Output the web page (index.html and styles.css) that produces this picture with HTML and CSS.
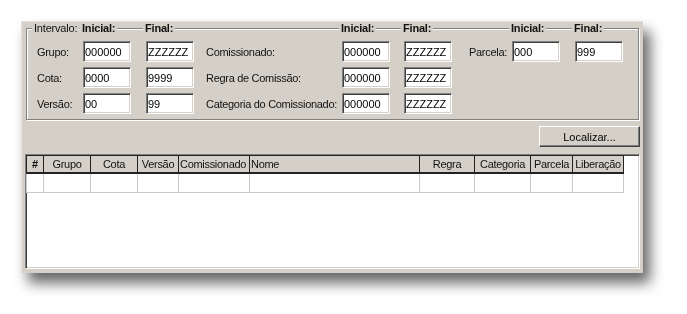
FILE: index.html
```html
<!DOCTYPE html>
<html>
<head>
    <meta charset="utf-8">
    <title>Localizar comissões</title>
    <link rel="stylesheet" href="styles.css">
</head>
<body>
    <div class="page">
        <div class="window">
            <!-- intervalo de pesquisa -->
            <div class="range">
                <span class="cap col-a">Intervalo:</span>
                <span class="cap bold col-b">Inicial:</span>
                <span class="cap bold col-c">Final:</span>
                <span class="cap bold col-e">Inicial:</span>
                <span class="cap bold col-f">Final:</span>
                <span class="cap bold col-h">Inicial:</span>
                <span class="cap bold col-i">Final:</span>

                <label class="lbl col-a">Grupo:</label>
                <input class="field col-b" type="text" value="000000">
                <input class="field col-c" type="text" value="ZZZZZZ">
                <label class="lbl lbl-mid col-d">Comissionado:</label>
                <input class="field col-e" type="text" value="000000">
                <input class="field col-f" type="text" value="ZZZZZZ">
                <label class="lbl lbl-right col-g">Parcela:</label>
                <input class="field col-h" type="text" value="000">
                <input class="field col-i" type="text" value="999">

                <label class="lbl col-a">Cota:</label>
                <input class="field col-b" type="text" value="0000">
                <input class="field col-c" type="text" value="9999">
                <label class="lbl lbl-mid col-d">Regra de Comissão:</label>
                <input class="field col-e" type="text" value="000000">
                <input class="field col-f" type="text" value="ZZZZZZ">

                <label class="lbl col-a">Versão:</label>
                <input class="field col-b" type="text" value="00">
                <input class="field col-c" type="text" value="99">
                <label class="lbl lbl-mid col-d">Categoria do Comissionado:</label>
                <input class="field col-e" type="text" value="000000">
                <input class="field col-f" type="text" value="ZZZZZZ">
            </div>

            <div class="actions">
                <button class="btn" type="button">Localizar...</button>
            </div>

            <!-- resultado -->
            <div class="gridbox">
                <table class="grid">
                    <colgroup>
                        <col class="w-num">
                        <col class="w-grupo">
                        <col class="w-cota">
                        <col class="w-versao">
                        <col class="w-comis">
                        <col class="w-nome">
                        <col class="w-regra">
                        <col class="w-cat">
                        <col class="w-parc">
                        <col class="w-lib">
                    </colgroup>
                    <tr>
                        <th class="first bold">#</th>
                        <th>Grupo</th>
                        <th>Cota</th>
                        <th>Versão</th>
                        <th class="left">Comissionado</th>
                        <th class="left">Nome</th>
                        <th>Regra</th>
                        <th>Categoria</th>
                        <th>Parcela</th>
                        <th>Liberação</th>
                    </tr>
                    <tr>
                        <td class="first"></td>
                        <td></td>
                        <td></td>
                        <td></td>
                        <td></td>
                        <td></td>
                        <td></td>
                        <td></td>
                        <td></td>
                        <td></td>
                    </tr>
                </table>
            </div>
        </div>
    </div>
</body>
</html>
```

FILE: styles.css
```css
html, body {
    height: 100%;
}
body {
    margin: 0;
    background-color: #fff;
    font-family: "Liberation Sans", Arial, sans-serif;
    font-size: 11px;
    color: #111;
}
.page {
    box-sizing: border-box;
    height: 314px;
    padding: 21px 0 0 21px;
}
.window {
    box-sizing: border-box;
    width: 622px;
    height: 252px;
    padding: 6px 3px 0 3px;
    background-color: #d4d0c8;
    border-top: 1px solid #e4e1db;
    border-left: 1px solid #e4e1db;
    filter: drop-shadow(7px 10px 7px rgba(0, 0, 0, 0.6));
}
.bold {
    font-weight: bold;
}
/* caixa de grupo */
.range {
    box-sizing: border-box;
    height: 92px;
    margin: 0 1px;
    padding-top: 1px;
    border: 1px solid #808080;
    box-shadow: 1px 1px 0 #fff, inset 1px 1px 0 #fff;
    display: grid;
    grid-template-columns: 56px 48px 15px 48px 148px 48px 14px 48px 60px 48px 15px 48px;
    grid-template-rows: 6px 21px 21px 21px;
    row-gap: 5px;
    align-items: center;
}
.col-a { grid-column: 1; }
.col-b { grid-column: 2; }
.col-c { grid-column: 4; }
.col-d { grid-column: 5; }
.col-e { grid-column: 6; }
.col-f { grid-column: 8; }
.col-g { grid-column: 9; }
.col-h { grid-column: 10; }
.col-i { grid-column: 12; }
.cap {
    align-self: start;
    justify-self: start;
    height: 13px;
    line-height: 13px;
    margin-top: -8px;
    margin-left: -3px;
    padding: 0 2px;
    background-color: #d4d0c8;
    white-space: nowrap;
    letter-spacing: -0.2px;
}
.cap.col-a {
    margin-left: 5px;
    font-weight: normal;
}
.lbl {
    padding-left: 10px;
    white-space: nowrap;
    letter-spacing: -0.3px;
}
.lbl-mid {
    padding-left: 12px;
}
.lbl-right {
    padding-left: 17px;
}
.field {
    box-sizing: border-box;
    width: 48px;
    height: 21px;
    margin: 0;
    padding: 0 1px;
    font-family: "Liberation Sans", Arial, sans-serif;
    font-size: 11px;
    color: #000;
    background-color: #fff;
    border-style: solid;
    border-width: 1px;
    border-color: #808080 #fff #fff #808080;
    box-shadow: inset 1px 1px 0 #404040, inset -1px -1px 0 #d4d0c8;
    outline: none;
}
/* botao */
.actions {
    display: flex;
    justify-content: flex-end;
    margin-top: 6px;
}
.btn {
    box-sizing: border-box;
    width: 101px;
    height: 21px;
    padding: 0;
    font-family: "Liberation Sans", Arial, sans-serif;
    font-size: 11px;
    color: #000;
    background-color: #d4d0c8;
    border-style: solid;
    border-width: 1px;
    border-color: #fff #404040 #404040 #fff;
    box-shadow: inset -1px -1px 0 #808080;
}
/* grade */
.gridbox {
    box-sizing: border-box;
    height: 115px;
    margin-top: 7px;
    background-color: #fff;
    border-style: solid;
    border-width: 1px;
    border-color: #808080 #fff #fff #808080;
    box-shadow: inset 1px 1px 0 #404040, inset -1px -1px 0 #d4d0c8;
}
.grid {
    table-layout: fixed;
    border-collapse: separate;
    border-spacing: 0;
    width: 598px;
}
.w-num { width: 18px; }
.w-grupo { width: 47px; }
.w-cota { width: 47px; }
.w-versao { width: 41px; }
.w-comis { width: 71px; }
.w-nome { width: 170px; }
.w-regra { width: 55px; }
.w-cat { width: 56px; }
.w-parc { width: 42px; }
.w-lib { width: 51px; }
.grid th,
.grid td {
    box-sizing: border-box;
    padding: 0 1px;
    overflow: hidden;
    white-space: nowrap;
}
.grid th {
    height: 19px;
    font-weight: normal;
    text-align: center;
    letter-spacing: -0.3px;
    background-color: #d4d0c8;
    border-top: 1px solid #222;
    border-right: 1px solid #222;
    border-bottom: 2px solid #222;
}
.grid th.bold {
    font-weight: bold;
}
.grid th.left {
    text-align: left;
}
.grid th.first {
    border-left: 1px solid #222;
}
.grid td {
    height: 19px;
    border-right: 1px solid #c8c8c8;
    border-bottom: 1px solid #c8c8c8;
}
.grid td.first {
    border-left: 1px solid #c8c8c8;
}
```
